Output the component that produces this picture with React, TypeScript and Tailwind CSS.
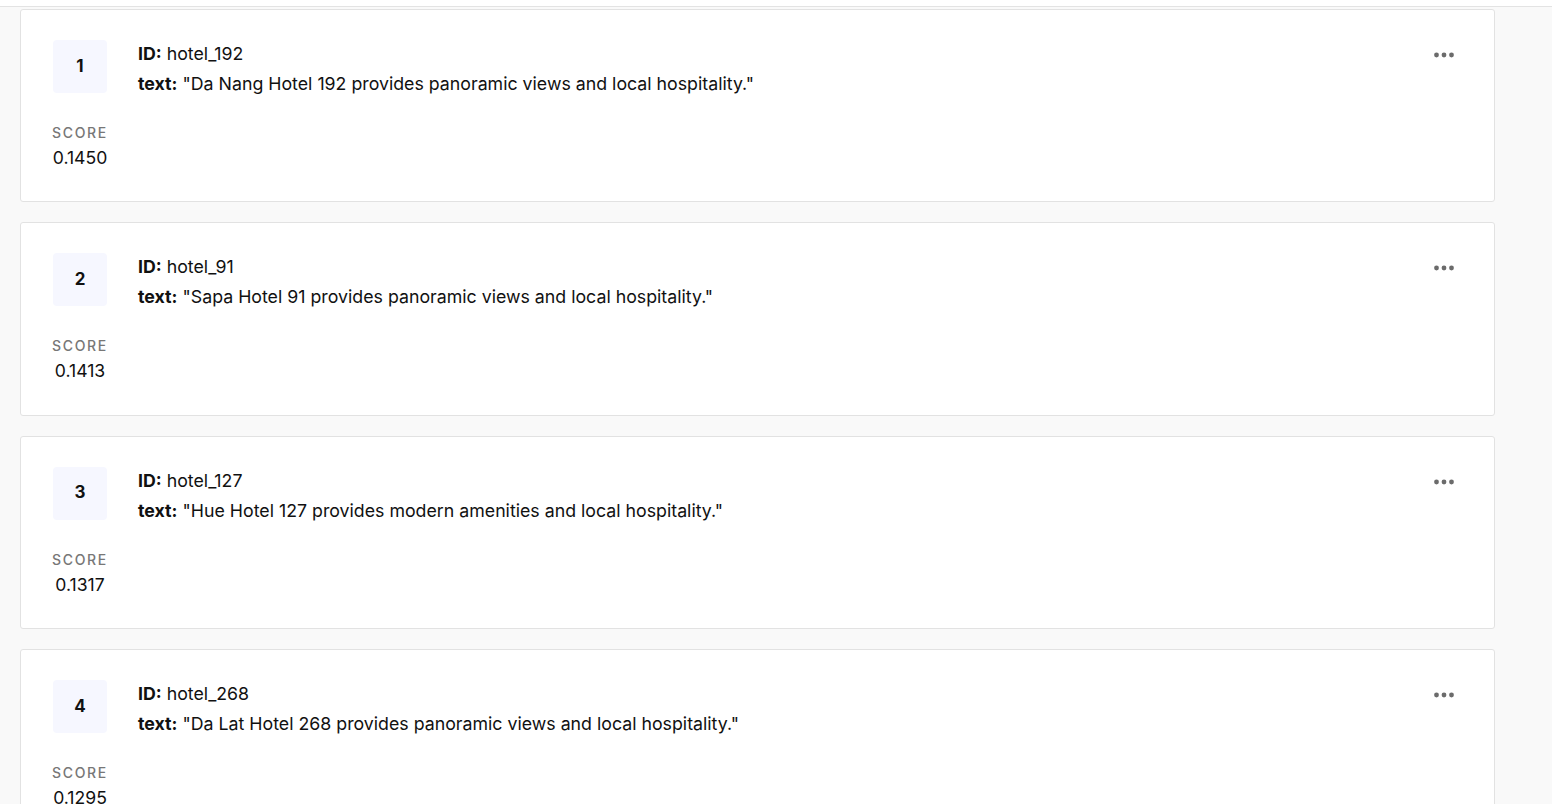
import React from "react";

const items = [
  { n: 1, id: "hotel_192", text: "Da Nang Hotel 192 provides panoramic views and local hospitality.", score: "0.1450" },
  { n: 2, id: "hotel_91", text: "Sapa Hotel 91 provides panoramic views and local hospitality.", score: "0.1413" },
  { n: 3, id: "hotel_127", text: "Hue Hotel 127 provides modern amenities and local hospitality.", score: "0.1317" },
  { n: 4, id: "hotel_268", text: "Da Lat Hotel 268 provides panoramic views and local hospitality.", score: "0.1295" },
];

function Dots() {
  return (
    <svg width="24" height="24" viewBox="0 0 24 24" fill="#6b6b6b">
      <circle cx="4.5" cy="12" r="2.4" />
      <circle cx="12" cy="12" r="2.4" />
      <circle cx="19.5" cy="12" r="2.4" />
    </svg>
  );
}

export default function App() {
  return (
    <div
      className="min-h-screen w-full bg-[#f9f9f9] text-[#111]"
      style={{ fontFamily: "Inter, 'Noto Sans', sans-serif" }}
    >
      <div className="h-[7px] bg-white border-b border-[#e3e3e3]" />
      <div className="pl-[20px] pr-[57px] pt-[2px] flex flex-col gap-[20px]">
        {items.map((it) => (
          <div
            key={it.n}
            className="h-[193.3px] bg-white border border-[#e2e2e2] rounded-[3px] pl-[32px] pr-[32px] pt-[30px] flex shrink-0"
          >
            <div className="w-[54px] flex flex-col items-center shrink-0">
              <div className="w-[54px] h-[53px] rounded-[4px] bg-[#f6f7ff] flex items-center justify-center text-[17px] font-bold text-[#111]">
                {it.n}
              </div>
              <div className="mt-[30px] text-[14px] leading-[20px] tracking-[0.12em] font-medium text-[#777] uppercase">
                Score
              </div>
              <div className="mt-[4px] text-[17.6px] leading-[22px] text-[#111]">{it.score}</div>
            </div>
            <div className="ml-[31px] flex-1 pt-[2px]">
              <div className="text-[17.75px] leading-[24px]">
                <span className="font-bold">ID:</span> {it.id}
              </div>
              <div className="mt-[6px] text-[17.75px] leading-[24px]">
                <span className="font-bold">text:</span> "{it.text}"
              </div>
            </div>
            <div className="shrink-0 pt-[3px] pr-[6px]">
              <Dots />
            </div>
          </div>
        ))}
      </div>
    </div>
  );
}
